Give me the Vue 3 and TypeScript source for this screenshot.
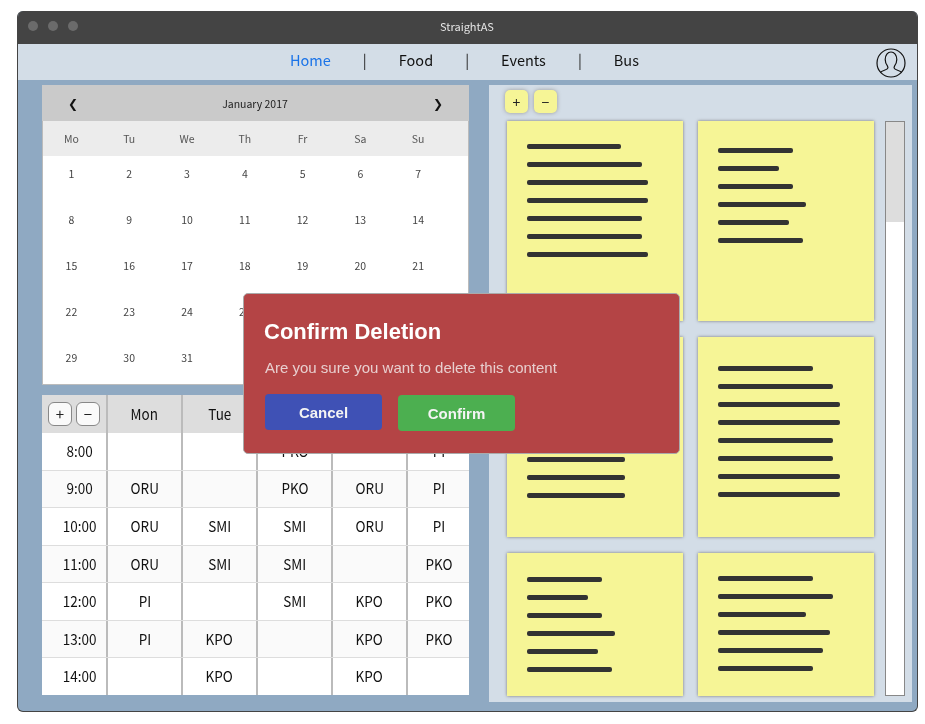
<script setup lang="ts">
// StraightAS dashboard mock: calendar + timetable on the left, sticky notes on the right.
const links = ['Home', 'Food', 'Events', 'Bus']
const weekdays = ['Mo', 'Tu', 'We', 'Th', 'Fr', 'Sa', 'Su']
const days: number[] = Array.from({ length: 31 }, (_, i) => i + 1)
const columns = ['Mon', 'Tue', 'Wed', 'Thu', 'Fri']
const timetable: { time: string; cells: string[] }[] = [
  { time: '8:00', cells: ['', '', 'PKO', '', 'PI'] },
  { time: '9:00', cells: ['ORU', '', 'PKO', 'ORU', 'PI'] },
  { time: '10:00', cells: ['ORU', 'SMI', 'SMI', 'ORU', 'PI'] },
  { time: '11:00', cells: ['ORU', 'SMI', 'SMI', '', 'PKO'] },
  { time: '12:00', cells: ['PI', '', 'SMI', 'KPO', 'PKO'] },
  { time: '13:00', cells: ['PI', 'KPO', '', 'KPO', 'PKO'] },
  { time: '14:00', cells: ['', 'KPO', '', 'KPO', ''] },
]
const notes: { top: number; lines: number[] }[] = [
  { top: 23, lines: [94, 115, 121, 121, 115, 115, 121] },
  { top: 27, lines: [75, 61, 75, 88, 71, 85] },
  { top: 30, lines: [94, 115, 121, 121, 98, 98, 98, 98] },
  { top: 29, lines: [95, 115, 122, 122, 115, 115, 122, 122] },
  { top: 24, lines: [75, 61, 75, 88, 71, 85] },
  { top: 23, lines: [95, 115, 88, 112, 105, 95] },
]
</script>

<template>
  <div class="page">
    <div class="window">
      <header class="titlebar">
        <span class="light" /><span class="light" /><span class="light" />
        <span class="title">StraightAS</span>
      </header>
      <nav class="nav">
        <template v-for="(link, i) in links" :key="link">
          <span v-if="i > 0" class="sep">|</span>
          <a class="link" :class="{ active: i === 0 }">{{ link }}</a>
        </template>
        <svg class="avatar" width="30" height="30" viewBox="0 0 30 30" fill="none" stroke="#111" stroke-width="1.2">
          <circle cx="15" cy="15" r="14" />
          <path d="M4.500 24.500c1.200-2.200 5.500-2.200 7-3.800.6-.8.5-2-.1-2.900-1.400-1.800-2.200-3.800-2.200-6.300 0-4.300 2.500-7.500 5.800-7.500s5.800 3.200 5.800 7.500c0 2.500-.8 4.500-2.200 6.300-.6.9-.7 2.100-.1 2.900 1.500 1.600 5.800 1.600 7 3.800" />
        </svg>
      </nav>
      <main class="body">
        <section class="left">
          <div class="calendar">
            <div class="cal-head">
              <span class="arrow">❮</span>
              <span class="month">January 2017</span>
              <span class="arrow">❯</span>
            </div>
            <div class="cal-week">
              <span v-for="d in weekdays" :key="d">{{ d }}</span>
            </div>
            <div class="cal-days">
              <span v-for="d in days" :key="d">{{ d }}</span>
            </div>
          </div>
          <div class="table">
            <div class="row head">
              <div class="cell tools">
                <button class="tool">+</button>
                <button class="tool">−</button>
              </div>
              <div v-for="c in columns" :key="c" class="cell"><span class="txt">{{ c }}</span></div>
            </div>
            <div v-for="r in timetable" :key="r.time" class="row">
              <div class="cell time"><span class="txt">{{ r.time }}</span></div>
              <div v-for="(c, i) in r.cells" :key="i" class="cell"><span class="txt">{{ c }}</span></div>
            </div>
          </div>
        </section>
        <section class="right">
          <div class="note-tools">
            <button class="note-tool">+</button>
            <button class="note-tool">−</button>
          </div>
          <div class="note-area">
            <div class="notes">
              <div v-for="(n, i) in notes" :key="i" class="note" :style="{ paddingTop: n.top + 'px' }">
                <span v-for="(w, j) in n.lines" :key="j" class="line" :style="{ width: w + 'px' }" />
              </div>
            </div>
            <div class="scrollbar"><div class="thumb" /></div>
          </div>
        </section>
      </main>
      <div class="modal">
        <h2>Confirm Deletion</h2>
        <p>Are you sure you want to delete this content</p>
        <div class="actions">
          <button class="btn cancel">Cancel</button>
          <button class="btn confirm">Confirm</button>
        </div>
      </div>
    </div>
  </div>
</template>

<style scoped>
.page {
  width: 925px;
  height: 724px;
  padding: 11px 7px 12px 17px;
  box-sizing: border-box;
  background: #fff;
  font-family: "Noto Sans CJK JP", "Noto Sans", sans-serif;
}
.window {
  position: relative;
  height: 701px;
  display: flex;
  flex-direction: column;
  background: #8fa9c2;
  border: 1px solid #444;
  border-top: 0;
  border-radius: 6px;
  overflow: hidden;
  box-sizing: border-box;
  will-change: transform;
}
.titlebar {
  height: 33px;
  flex: none;
  background: #444;
  display: flex;
  align-items: center;
  gap: 10px;
  padding-left: 10px;
  position: relative;
}
.light {
  width: 10px;
  height: 10px;
  border-radius: 50%;
  background: #6b6b6b;
  margin-top: -3px;
}
.title {
  position: absolute;
  left: 0;
  right: 1px;
  top: 7px;
  text-align: center;
  color: #e6e6e6;
  font-size: 11px;
}
.nav {
  height: 36px;
  flex: none;
  box-sizing: border-box;
  padding: 0 6px 6px 0;
  background: #d3dde7;
  display: flex;
  align-items: center;
  justify-content: center;
  position: relative;
  font-size: 14.5px;
  color: #111;
}
.sep {
  margin: 0 32px;
  color: #222;
}
.link.active {
  color: #1a73e8;
}
.avatar {
  position: absolute;
  right: 11px;
  top: 4px;
}
.body {
  flex: 1;
  display: flex;
  padding: 5px 5px 9px 24px;
  gap: 20px;
  min-height: 0;
}
.left {
  width: 427px;
  flex: none;
  display: flex;
  flex-direction: column;
  gap: 10px;
}
.calendar {
  height: 300px;
  flex: none;
  box-sizing: border-box;
  background: #fff;
  border: 1px solid #bbb;
  border-top: 0;
  color: #444;
}
.cal-head {
  height: 36px;
  margin: 0 -1px;
  background: #cacaca;
  display: flex;
  align-items: center;
  justify-content: space-between;
  padding: 0 26px;
  color: #222;
}
.arrow {
  font-size: 12px;
  color: #111;
  margin-top: -2px;
}
.month {
  font-size: 10.5px;
  margin-left: -1px;
}
.cal-week {
  height: 35px;
  background: #ececec;
  display: grid;
  grid-template-columns: repeat(7, 57.8px);
  align-items: center;
  text-align: center;
  font-size: 10.5px;
  color: #555;
}
.cal-week span,
.cal-days span {
  margin-left: -1px;
}
.cal-days {
  display: grid;
  grid-template-columns: repeat(7, 57.8px);
  grid-auto-rows: 46px;
  align-items: center;
  text-align: center;
  font-size: 10.5px;
  margin-top: -6px;
}
.table {
  height: 300px;
  display: flex;
  flex-direction: column;
  background: #fff;
  font-size: 15px;
  color: #111;
}
.row {
  flex: 1;
  display: grid;
  grid-template-columns: 64px repeat(4, 75px) 1fr;
  align-items: stretch;
  border-bottom: 1px solid #ddd;
  box-sizing: border-box;
}
.row:last-child {
  border-bottom: 0;
}
.row:nth-child(odd) {
  background: #fafafa;
}
.row:nth-child(even) {
  background: #fff;
}
.row.head {
  flex: none;
  height: 38px;
  border-bottom: 0;
  background: #ddd;
}
.cell {
  display: flex;
  align-items: center;
  justify-content: center;
  border-left: 2px solid #bbb;
  padding-bottom: 2px;
}
.cell:first-child {
  border-left: 0;
}
.txt {
  display: inline-block;
  transform: scaleX(0.9);
}
.time {
  padding-left: 12px;
}
.tools {
  gap: 4px;
  padding-bottom: 0;
}
.tool {
  width: 24px;
  height: 24px;
  padding: 0 0 2px;
  background: #fafafa;
  border: 1px solid #888;
  border-radius: 6px;
  font: 15px/1 "Noto Sans CJK JP", sans-serif;
  color: #222;
}
.right {
  flex: 1;
  background: #d3dde7;
  display: flex;
  flex-direction: column;
  padding: 5px 6px 6px 18px;
  min-width: 0;
}
.note-tools {
  display: flex;
  gap: 6px;
  height: 31px;
  flex: none;
  margin-left: -2px;
}
.note-tool {
  width: 23px;
  height: 23px;
  padding: 0;
  background: #f6f596;
  border: 0;
  border-radius: 5px;
  box-shadow: 0 0 4px #999;
  font: 14px/1 "Noto Sans CJK JP", sans-serif;
  color: #222;
}
.note-area {
  flex: 1;
  display: flex;
  min-height: 0;
}
.notes {
  width: 367px;
  flex: none;
  display: grid;
  grid-template-columns: 176px 176px;
  grid-template-rows: 200px 200px 143px;
  gap: 16px 15px;
}
.note {
  background: #f6f596;
  box-shadow: 0 0 3px #777;
  padding-left: 20px;
  display: flex;
  flex-direction: column;
  align-items: flex-start;
  gap: 13px;
  box-sizing: border-box;
  overflow: hidden;
}
.line {
  flex: none;
  height: 5px;
  border-radius: 2px;
  background: #333;
}
.scrollbar {
  width: 18px;
  height: 573px;
  margin-left: 11px;
  background: #fff;
  border: 1px solid #888;
}
.thumb {
  height: 100px;
  background: #ddd;
}
.modal {
  position: absolute;
  left: 225px;
  top: 282px;
  width: 437px;
  height: 161px;
  box-sizing: border-box;
  background: #b44445;
  border: 1px solid #aaa;
  border-radius: 5px;
  padding: 24px 20px;
  font-family: "Liberation Sans", Arial, sans-serif;
}
.modal h2 {
  margin: 0;
  font-size: 22px;
  line-height: 28px;
  color: #fff;
}
.modal p {
  margin: 13px 0 0 1px;
  font-size: 15px;
  line-height: 18px;
  color: #e8cfcf;
}
.actions {
  display: flex;
  align-items: flex-start;
  gap: 16px;
  margin: 17px 0 0 1px;
}
.btn {
  width: 117px;
  height: 36px;
  border: 0;
  border-radius: 4px;
  font: bold 15px "Liberation Sans", Arial, sans-serif;
  color: #f4f4f4;
}
.cancel {
  background: #3f51b5;
}
.confirm {
  margin-top: 1px;
  background: #4caf50;
}
</style>
